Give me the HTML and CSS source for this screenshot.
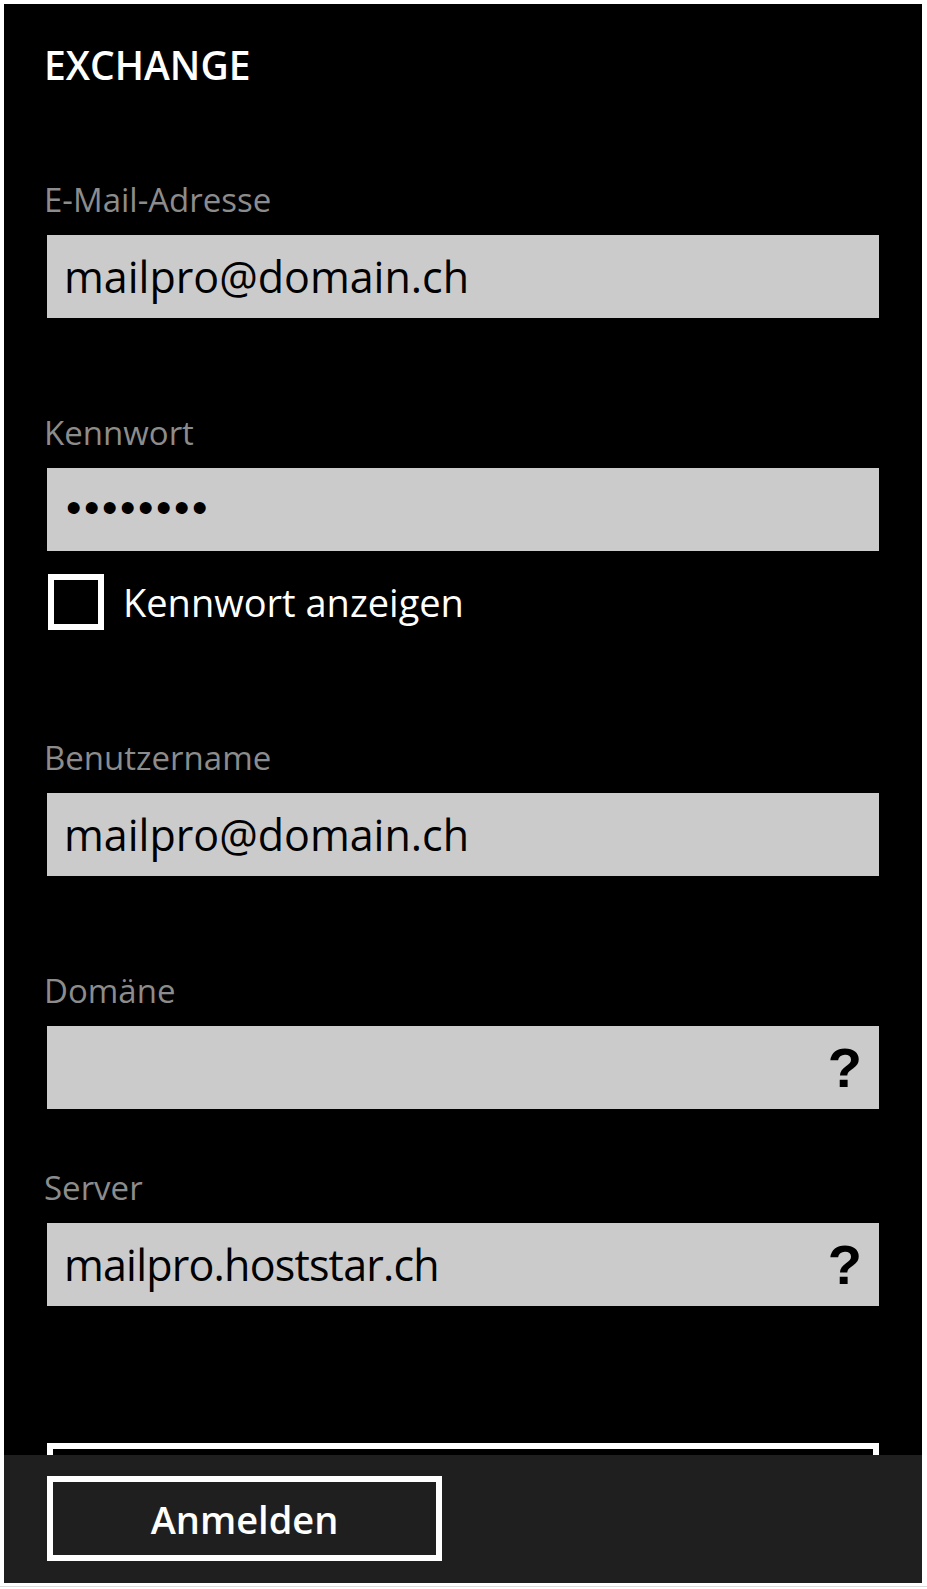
FILE: index.html
```html
<!DOCTYPE html>
<html lang="de">
<head>
    <meta charset="UTF-8">
    <meta name="viewport" content="width=device-width, initial-scale=1.0">
    <title>Exchange</title>
    <link rel="stylesheet" href="styles.css">
</head>
<body>
    <div class="shot">
        <div class="screen">
            <div class="content">
                <h1 class="title">EXCHANGE</h1>

                <div class="field">
                    <label class="label">E-Mail-Adresse</label>
                    <div class="box">mailpro@domain.ch</div>
                </div>

                <div class="field">
                    <label class="label">Kennwort</label>
                    <div class="box"><span class="dots">••••••••</span></div>
                </div>

                <div class="check">
                    <span class="check-box"></span>
                    <span class="check-text">Kennwort anzeigen</span>
                </div>

                <div class="field field-user">
                    <label class="label">Benutzername</label>
                    <div class="box">mailpro@domain.ch</div>
                </div>

                <div class="field">
                    <label class="label">Domäne</label>
                    <div class="box"><span class="value"></span><span class="help">?</span></div>
                </div>

                <div class="field field-server">
                    <label class="label">Server</label>
                    <div class="box"><span class="value tight">mailpro.hoststar.ch</span><span class="help">?</span></div>
                </div>

                <button class="wide" aria-label="Erweitert"></button>
            </div>

            <div class="appbar">
                <button class="btn">Anmelden</button>
            </div>
        </div>
    </div>
</body>
</html>
```

FILE: styles.css
```css
body {
    margin: 0;
    background: #fff;
    font-family: "Open Sans", "Noto Sans", sans-serif;
}

.shot {
    width: 921px;
    padding: 4px 3px 3px 4px;
    border-right: 1px solid #dcdcdc;
    border-bottom: 1px solid #dcdcdc;
}

.screen {
    position: relative;
    width: 918px;
    height: 1579px;
    background: #000;
    overflow: hidden;
}

.content {
    padding: 41px 43px 0 43px;
}

.title {
    margin: 0 0 0 -3px;
    height: 40px;
    line-height: 40px;
    font-size: 39px;
    font-weight: 600;
    color: #fff;
}

.field {
    margin-top: 95px;
}

.label {
    display: block;
    height: 40px;
    line-height: 40px;
    font-size: 33px;
    color: #8c8c8c;
    margin: 0 0 15px -3px;
}

.box {
    display: flex;
    align-items: center;
    justify-content: space-between;
    height: 83px;
    line-height: 80px;
    padding: 0 17px 0 17px;
    background: #cbcbcb;
    color: #000;
    font-size: 43px;
    white-space: nowrap;
}

.tight {
    letter-spacing: -0.8px;
}

.dots {
    font-family: "Liberation Sans", Arial, sans-serif;
    font-size: 44px;
    letter-spacing: 2.6px;
    margin: -4px 0 0 2px;
}

.help {
    font-family: "Liberation Sans", Arial, sans-serif;
    font-weight: 700;
    font-size: 56px;
}

.check {
    display: flex;
    align-items: center;
    margin-top: 23px;
    height: 56px;
}

.check-box {
    box-sizing: border-box;
    width: 56px;
    height: 56px;
    margin-left: 1px;
    border: 6px solid #fff;
}

.check-text {
    margin-left: 19px;
    color: #fff;
    font-size: 38px;
}

.field-user {
    margin-top: 108px;
}

.field-server {
    margin-top: 59px;
}

.wide {
    display: block;
    width: 100%;
    height: 85px;
    margin-top: 137px;
    background: transparent;
    border: 6px solid #fff;
}

.appbar {
    position: absolute;
    left: 0;
    right: 0;
    bottom: 0;
    height: 128px;
    background: #1f1f1f;
    padding: 21px 43px 0 43px;
    box-sizing: border-box;
}

.btn {
    width: 395px;
    height: 85px;
    background: transparent;
    border: 6px solid #fff;
    color: #fff;
    font-family: "Open Sans", "Noto Sans", sans-serif;
    font-size: 38px;
    font-weight: 600;
    padding: 0;
}
```
